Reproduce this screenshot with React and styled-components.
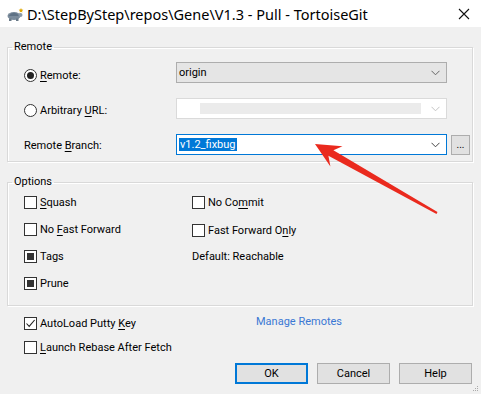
import React from 'react';
import styled, { createGlobalStyle } from 'styled-components';

const Global = createGlobalStyle`
  html, body { margin: 0; padding: 0; background: #f0f0f0; }
`;

const Window = styled.div`
  position: relative;
  width: 481px;
  height: 394px;
  overflow: hidden;
  background: #f0f0f0;
  display: flex;
  flex-direction: column;
  font-family: Roboto, "Noto Sans", sans-serif;
  font-size: 11px;
  color: #000;
`;

const TitleBar = styled.div`
  height: 27px;
  flex: none;
  background: #fff;
  display: flex;
  align-items: center;
  padding: 0 11px 0 6px;
  gap: 3px;
  font-family: "Noto Sans", sans-serif;
  font-size: 14.5px;
`;

const TitleText = styled.span`
  flex: 1;
  white-space: nowrap;
`;

const Body = styled.div`
  padding: 12px 8px 0 7px;
  display: flex;
  flex-direction: column;
`;

const Group = styled.fieldset`
  margin: 0 0 ${p => p.$after || 0}px;
  padding: 0;
  min-width: 0;
  border: 1px solid #d9d9d9;
  box-shadow: inset 1px 1px 0 #fff, 1px 1px 0 #fff;
`;

const Legend = styled.legend`
  margin-left: 4px;
  padding: 0 2px;
  line-height: 16px;
`;

const RemoteGrid = styled.div`
  display: grid;
  grid-template-columns: 148px 271px 19px;
  grid-auto-rows: 21px;
  column-gap: 4px;
  row-gap: 15px;
  align-items: center;
  padding: 7px 0 6px 16px;
`;

const OptionGrid = styled.div`
  display: grid;
  grid-template-columns: 168px 1fr;
  grid-auto-rows: 16px;
  row-gap: 11px;
  align-items: center;
  padding: 4px 0 14px 16px;
`;

const FooterGrid = styled.div`
  display: grid;
  grid-template-columns: 232px 1fr;
  grid-auto-rows: 16px;
  row-gap: 8px;
  align-items: center;
  padding: 9px 0 0 17px;
`;

const Choice = styled.label`
  display: flex;
  align-items: center;
  gap: 3px;
  white-space: nowrap;
  margin-top: ${p => p.$dy || 0}px;
`;

const Plain = styled.span`
  white-space: nowrap;
  margin-top: ${p => p.$dy || 0}px;
`;

const Key = styled.span`
  text-decoration: underline;
  text-underline-offset: 2px;
`;

const RadioMark = styled.span`
  width: 13px;
  height: 13px;
  box-sizing: border-box;
  border-radius: 50%;
  border: 1px solid #333;
  background: #fff;
  display: flex;
  align-items: center;
  justify-content: center;
  flex: none;
  &::after {
    content: '';
    width: 7px;
    height: 7px;
    border-radius: 50%;
    background: ${p => (p.$on ? '#222' : 'transparent')};
  }
`;

const Box = styled.span`
  width: 13px;
  height: 13px;
  box-sizing: border-box;
  border: 1px solid #333;
  background: #fff;
  display: flex;
  align-items: center;
  justify-content: center;
  flex: none;
`;

const Fill = styled.span`
  width: 7px;
  height: 7px;
  background: #333;
`;

const Combo = styled.div`
  width: 271px;
  height: 21px;
  box-sizing: border-box;
  border: 1px solid ${p => p.$border};
  background: ${p => p.$bg};
  display: flex;
  align-items: center;
  padding: 0 6px 0 2px;
  gap: 4px;
`;

const ComboText = styled.span`
  flex: 1;
  white-space: nowrap;
`;

const Selected = styled.span`
  background: #0078d7;
  color: #fff;
  padding: 0 1px;
  line-height: 14px;
`;

const Masked = styled.span`
  flex: 1;
  align-self: stretch;
  margin: 4px 6px 4px 21px;
  background: #ebebeb;
`;

const SmallButton = styled.div`
  width: 19px;
  height: 20px;
  box-sizing: border-box;
  border: 1px solid #adadad;
  background: #e1e1e1;
  display: flex;
  align-items: flex-end;
  justify-content: center;
  padding-bottom: 5px;
  font-size: 10px;
  line-height: 9px;
`;

const Link = styled.span`
  color: #3a78d4;
  margin-top: -3px;
`;

const ButtonRow = styled.div`
  display: flex;
  justify-content: flex-end;
  gap: 9px;
  padding-right: 1px;
  margin-top: 8px;
`;

const Button = styled.div`
  width: 73px;
  height: 21px;
  box-sizing: border-box;
  border: ${p => (p.$default ? '2px solid #0078d7' : '1px solid #adadad')};
  background: #e1e1e1;
  display: flex;
  align-items: center;
  justify-content: center;
`;

const Overlay = styled.svg`
  position: absolute;
  left: 0;
  top: 0;
  pointer-events: none;
`;

const Grip = styled.svg`
  position: absolute;
  right: 2px;
  bottom: 2px;
`;

const Chevron = ({ color = '#555' }) => (
  <svg width="9" height="6" viewBox="0 0 9 6">
    <polyline points="0.5,0.8 4.5,4.8 8.5,0.8" fill="none" stroke={color} strokeWidth="1" />
  </svg>
);

const Turtle = () => (
  <svg width="18" height="16" viewBox="0 0 18 16">
    <ellipse cx="8" cy="10" rx="6.5" ry="4" fill="#7b8c9c" />
    <path d="M2.5 10 Q8 3.5 13.5 10 Z" fill="#5f7285" />
    <circle cx="14.5" cy="9" r="2" fill="#8a9aa8" />
    <rect x="3" y="12.5" width="2.5" height="2.5" fill="#6a7a88" />
    <rect x="10" y="12.5" width="2.5" height="2.5" fill="#6a7a88" />
    <path d="M15 2 L15.7 3.6 L17.3 3.8 L16.1 4.9 L16.4 6.5 L15 5.7 L13.6 6.5 L13.9 4.9 L12.7 3.8 L14.3 3.6 Z" fill="#e0a800" />
  </svg>
);

const Close = () => (
  <svg width="12" height="12" viewBox="0 0 12 12">
    <path d="M1 1 L11 11 M11 1 L1 11" stroke="#111" strokeWidth="1.1" />
  </svg>
);

const Check = () => (
  <svg width="11" height="11" viewBox="0 0 11 11">
    <polyline points="1.5,5.5 4.2,8.4 9.6,2" fill="none" stroke="#222" strokeWidth="1.1" />
  </svg>
);

const CheckBox = ({ state, children, dy }) => (
  <Choice $dy={dy}>
    <Box>
      {state === 'fill' && <Fill />}
      {state === 'check' && <Check />}
    </Box>
    <span>{children}</span>
  </Choice>
);

export default function App() {
  return (
    <Window>
      <Global />
      <TitleBar>
        <Turtle />
        <TitleText>D:\StepByStep\repos\Gene\V1.3 - Pull - TortoiseGit</TitleText>
        <Close />
      </TitleBar>

      <Body>
        <Group $after={12}>
          <Legend>Remote</Legend>
          <RemoteGrid>
            <Choice $dy={6}>
              <RadioMark $on />
              <span><Key>R</Key>emote:</span>
            </Choice>
            <Combo $border="#adadad" $bg="#e5e5e5">
              <ComboText>origin</ComboText>
              <Chevron color="#666" />
            </Combo>
            <span />

            <Choice $dy={3}>
              <RadioMark />
              <span>Arbitrary <Key>U</Key>RL:</span>
            </Choice>
            <Combo $border="#dadada" $bg="#fff">
              <Masked />
              <Chevron color="#c4c4c4" />
            </Combo>
            <span />

            <Plain $dy={1}>Remote <Key>B</Key>ranch:</Plain>
            <Combo $border="#0078d7" $bg="#fff">
              <ComboText><Selected>v1.2_fixbug</Selected></ComboText>
              <Chevron color="#444" />
            </Combo>
            <SmallButton>...</SmallButton>
          </RemoteGrid>
        </Group>

        <Group>
          <Legend>Options</Legend>
          <OptionGrid>
            <CheckBox><Key>S</Key>quash</CheckBox>
            <CheckBox>No Co<Key>m</Key>mit</CheckBox>
            <CheckBox>No <Key>F</Key>ast Forward</CheckBox>
            <CheckBox dy={2}>Fast Forward O<Key>n</Key>ly</CheckBox>
            <CheckBox state="fill">Tags</CheckBox>
            <Plain>Default: Reachable</Plain>
            <CheckBox state="fill">Prune</CheckBox>
          </OptionGrid>
        </Group>

        <FooterGrid>
          <CheckBox state="check">AutoLoad Putty <Key>K</Key>ey</CheckBox>
          <Link>Manage Remotes</Link>
          <CheckBox><Key>L</Key>aunch Rebase After Fetch</CheckBox>
        </FooterGrid>

        <ButtonRow>
          <Button $default>OK</Button>
          <Button>Cancel</Button>
          <Button>Help</Button>
        </ButtonRow>
      </Body>

      <Grip width="6" height="6" viewBox="0 0 6 6">
        <rect x="4" y="0" width="1" height="1" fill="#aaa" />
        <rect x="2" y="2" width="1" height="1" fill="#aaa" />
        <rect x="4" y="2" width="1" height="1" fill="#aaa" />
        <rect x="0" y="4" width="1" height="1" fill="#aaa" />
        <rect x="2" y="4" width="1" height="1" fill="#aaa" />
        <rect x="4" y="4" width="1" height="1" fill="#aaa" />
      </Grip>

      <Overlay width="481" height="394" viewBox="0 0 481 394">
        <polygon
          points="315,144 342.5,146.2 333.4,150.3 437.5,212.1 436.5,213.9 328.4,155.8 330.4,166.5"
          fill="#ea2a1e"
        />
      </Overlay>
    </Window>
  );
}
